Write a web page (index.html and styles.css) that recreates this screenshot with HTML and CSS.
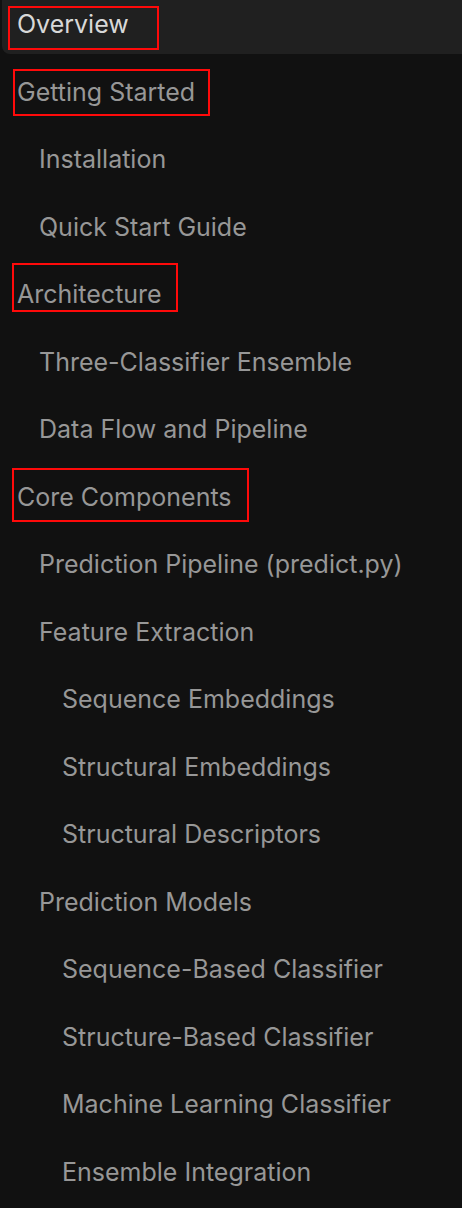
FILE: index.html
```html
<!DOCTYPE html>
<html lang="en">
<head>
<meta charset="utf-8">
<title>Docs navigation</title>
<link rel="stylesheet" href="styles.css">
</head>
<body>
<nav class="nav">
  <ul class="tree">
    <li class="item lvl1 active">Overview</li>
    <li class="item lvl1">Getting Started</li>
    <li class="item lvl2">Installation</li>
    <li class="item lvl2">Quick Start Guide</li>
    <li class="item lvl1">Architecture</li>
    <li class="item lvl2">Three-Classifier Ensemble</li>
    <li class="item lvl2">Data Flow and Pipeline</li>
    <li class="item lvl1">Core Components</li>
    <li class="item lvl2">Prediction Pipeline (predict.py)</li>
    <li class="item lvl2">Feature Extraction</li>
    <li class="item lvl3">Sequence Embeddings</li>
    <li class="item lvl3">Structural Embeddings</li>
    <li class="item lvl3">Structural Descriptors</li>
    <li class="item lvl2">Prediction Models</li>
    <li class="item lvl3">Sequence-Based Classifier</li>
    <li class="item lvl3">Structure-Based Classifier</li>
    <li class="item lvl3">Machine Learning Classifier</li>
    <li class="item lvl3">Ensemble Integration</li>
  </ul>
  <div class="mark m-overview"></div>
  <div class="mark m-started"></div>
  <div class="mark m-arch"></div>
  <div class="mark m-core"></div>
</nav>
</body>
</html>
```
FILE: styles.css
```css
html, body {
  margin: 0;
  padding: 0;
  background: #111111;
}
body {
  font-family: Inter, "Noto Sans", "Liberation Sans", sans-serif;
  overflow: hidden;
}
.nav {
  position: relative;
  padding-left: 2px;
}
.tree {
  list-style: none;
  margin: 0;
  padding: 0;
  display: flex;
  flex-direction: column;
  gap: 13.5px;
}
.item {
  font-size: 25px;
  line-height: 32px;
  padding: 8px 0 14px;
  color: #979797;
  white-space: nowrap;
}
.lvl1 { padding-left: 15px; }
.lvl2 { padding-left: 37px; }
.lvl3 { padding-left: 60px; }
.active {
  background: #202020;
  color: #d8d8d8;
  border-radius: 0 0 0 8px;
}
.mark {
  position: absolute;
  border: 2px solid #ff0a0a;
  box-sizing: border-box;
}
.m-overview { left: 8px; top: 6px; width: 151px; height: 44px; }
.m-started { left: 13px; top: 69px; width: 197px; height: 47px; }
.m-arch { left: 12px; top: 263px; width: 166px; height: 49px; }
.m-core { left: 12px; top: 468px; width: 237px; height: 54px; }
```
